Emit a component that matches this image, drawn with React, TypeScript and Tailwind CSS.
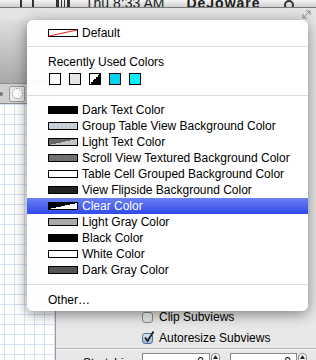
const font = "font-['Liberation_Sans',Arial,sans-serif]";

type Item = { label: string; swatch: string; selected?: boolean };

const items: Item[] = [
  { label: "Dark Text Color", swatch: "bg-black" },
  {
    label: "Group Table View Background Color",
    swatch:
      "bg-[repeating-linear-gradient(90deg,#c3cad3_0px,#c3cad3_2px,#ccd3db_2px,#ccd3db_4px)]",
  },
  {
    label: "Light Text Color",
    swatch: "bg-[linear-gradient(to_bottom_right,#676767_50%,#c4c4c4_50%)]",
  },
  {
    label: "Scroll View Textured Background Color",
    swatch:
      "bg-[repeating-linear-gradient(90deg,#6b6b6b_0px,#6b6b6b_1px,#777_1px,#777_2px)]",
  },
  { label: "Table Cell Grouped Background Color", swatch: "bg-white" },
  { label: "View Flipside Background Color", swatch: "bg-[#202020]" },
  {
    label: "Clear Color",
    swatch: "bg-[linear-gradient(to_bottom_right,#000_50%,#fff_50%)]",
    selected: true,
  },
  { label: "Light Gray Color", swatch: "bg-[#aaaaaa]" },
  { label: "Black Color", swatch: "bg-black" },
  { label: "White Color", swatch: "bg-white" },
  { label: "Dark Gray Color", swatch: "bg-[#555555]" },
];

const recent = [
  "bg-white",
  "bg-[#e6e6e6]",
  "bg-[linear-gradient(to_bottom_right,#fff_50%,#000_50%)]",
  "bg-[#00d6f2]",
  "bg-[#00f4ff]",
];

function Swatch({ cls }: { cls: string }) {
  return <span className={`block h-[8px] w-[30px] shrink-0 border border-black ${cls}`} />;
}

function Row({ item }: { item: Item }) {
  return (
    <div
      className={`flex h-[16px] items-center gap-[4px] pl-[21px] ${
        item.selected
          ? "bg-[linear-gradient(#6a80f5,#3149e9)] text-white"
          : "text-black"
      }`}
    >
      <Swatch cls={item.swatch} />
      <span className="whitespace-nowrap">{item.label}</span>
    </div>
  );
}

function Sep() {
  return <div className="h-px bg-[#dedede]" />;
}

function ColorMenu() {
  return (
    <div className="absolute left-[27px] top-[20px] w-[281px] rounded-[6px] bg-white/[0.97] pb-[3px] pt-[5px] text-[12px] leading-[16px] shadow-[0_3px_14px_rgba(0,0,0,0.45)]">
      <div className="flex h-[16px] items-center gap-[4px] pl-[21px]">
        <svg width="30" height="8" className="shrink-0">
          <rect x="0.5" y="0.5" width="29" height="7" fill="#fff" stroke="#000" />
          <line x1="1" y1="7" x2="29" y2="1" stroke="#ff1a1a" strokeWidth="1" />
        </svg>
        <span>Default</span>
      </div>
      <div className="mt-[5px]">
        <Sep />
      </div>
      <div className="mt-[7px] h-[16px] pl-[21px]">Recently Used Colors</div>
      <div className="mt-[3px] flex gap-[8px] pl-[22px]">
        {recent.map((c, i) => (
          <span key={i} className={`block h-[12px] w-[12px] border border-black ${c}`} />
        ))}
      </div>
      <div className="mt-[10px]">
        <Sep />
      </div>
      <div className="mt-[6px]">
        {items.map((it) => (
          <Row key={it.label} item={it} />
        ))}
      </div>
      <div className="mt-[6px]">
        <Sep />
      </div>
      <div className="mt-[7px] h-[16px] pl-[21px]">Other…</div>
    </div>
  );
}

function Checkbox({ checked }: { checked?: boolean }) {
  return (
    <span
      className={`relative block h-[11px] w-[11px] rounded-[3px] border ${
        checked
          ? "border-[#5b6f95] bg-[linear-gradient(#d6e3f5,#9fb7dc)]"
          : "border-[#8a8a8a] bg-[linear-gradient(#ffffff,#dcdcdc)]"
      }`}
    >
      {checked && (
        <svg width="12" height="14" viewBox="0 0 12 14" className="absolute -top-[4px] left-[0px]">
          <path d="M2 7.5 L4.6 11 L10.5 1.5" fill="none" stroke="#1b1b1b" strokeWidth="1.8" />
        </svg>
      )}
    </span>
  );
}

function Field({ w }: { w: string }) {
  return (
    <div className="flex items-start gap-[1px]">
      <div className={`h-[18px] ${w} border border-[#8c8c8c] bg-white pr-[5px] text-right text-[12px] leading-[16px]`}>
        0
      </div>
      <div className="flex h-[18px] w-[9px] justify-center rounded-t-[4px] border border-[#8c8c8c] bg-[linear-gradient(#fff,#e2e2e2)] pt-[1px]">
        <svg width="5" height="4" viewBox="0 0 5 4">
          <path d="M2.5 0 L5 4 L0 4 Z" fill="#222" />
        </svg>
      </div>
    </div>
  );
}

export default function App() {
  return (
    <div className={`relative flex h-[360px] w-[316px] flex-col overflow-hidden bg-[#e6e6e6] ${font}`}>
      {/* menu bar, mostly cropped off the top */}
      <div className="flex h-[8px] shrink-0 items-end overflow-hidden border-b border-[#7a7a7a] bg-[linear-gradient(#f4f4f4,#cfcfcf)] text-[14px] leading-none text-[#1c1c1c]">
        <span className="-mb-[4px] ml-[20px] block h-[14px] w-[14px] border-2 border-[#333]" />
        <span className="-mb-[4px] ml-[22px] block h-[14px] w-[14px] border-2 border-[#333] bg-[repeating-linear-gradient(90deg,#333_0px,#333_1px,transparent_1px,transparent_3px)]" />
        <span className="-mb-[3px] ml-[15px] whitespace-nowrap">Thu 8:33 AM</span>
        <span className="-mb-[3px] ml-[22px] whitespace-nowrap font-bold tracking-[1px]">DeJoware</span>
        <span className="-mb-[3px] ml-auto mr-[22px] block h-[10px] w-[10px] rounded-full border-2 border-[#333]" />
      </div>

      {/* window title strip */}
      <div className="flex h-[12px] shrink-0 items-center justify-end bg-[#e4e4e4] pr-[5px]">
        <svg width="9" height="9" viewBox="0 0 9 9">
          <path d="M1 8 L8 1 M4 1 H8 V5 M1 4 V8 H5" fill="none" stroke="#8a8a8a" strokeWidth="1" />
        </svg>
      </div>

      <div className="flex min-h-0 flex-1">
        {/* left document area */}
        <div className="flex w-[56px] shrink-0 flex-col">
          <div className="h-[63px] bg-[linear-gradient(#dedede,#a8a8a8)]" />
          <div className="flex h-[21px] items-center gap-[2px] border-y border-[#8e8e8e] bg-[#cfcfcf]">
            <span className="block h-[4px] w-[3px] rounded-r-full bg-[#7a7a7a]" />
            <span className="ml-[4px] flex h-[16px] w-[16px] items-center justify-center rounded-[2px] border border-[#9a9a9a] bg-[#e9e9e9]">
              <span className="block h-[11px] w-[11px] rounded-full border border-dotted border-[#8a8a8a] bg-white" />
            </span>
            <span className="text-[7px] leading-none text-[#333]">▼</span>
          </div>
          <div className="flex-1 border-r border-[#9c9c9c] bg-white [background-image:linear-gradient(to_right,#d3e2f7_1px,transparent_1px),linear-gradient(to_bottom,#d3e2f7_1px,transparent_1px)] [background-position:4px_0px] [background-size:10px_10px]" />
        </div>

        {/* inspector panel */}
        <div className="flex flex-1 flex-col bg-[#e8e8e8]">
          <div className="flex-1" />
          <div className="flex flex-col gap-[7px] pl-[86px] text-[12px] leading-[14px] text-black">
            <div className="flex items-center gap-[6px]">
              <Checkbox />
              <span>Clip Subviews</span>
            </div>
            <div className="flex items-center gap-[6px]">
              <Checkbox checked />
              <span>Autoresize Subviews</span>
            </div>
          </div>
          <div className="mt-[3px] h-px bg-[#b4b4b4]" />
          <div className="h-px bg-[#f6f6f6]" />
          <div className="-mb-[11px] mt-[3px] flex items-start">
            <span className="w-[81px] pt-[3px] text-right text-[12px] leading-[14px] text-black">Stretching</span>
            <div className="ml-[5px]">
              <Field w="w-[68px]" />
            </div>
            <div className="ml-[10px]">
              <Field w="w-[67px]" />
            </div>
          </div>
        </div>
      </div>

      <ColorMenu />
    </div>
  );
}
